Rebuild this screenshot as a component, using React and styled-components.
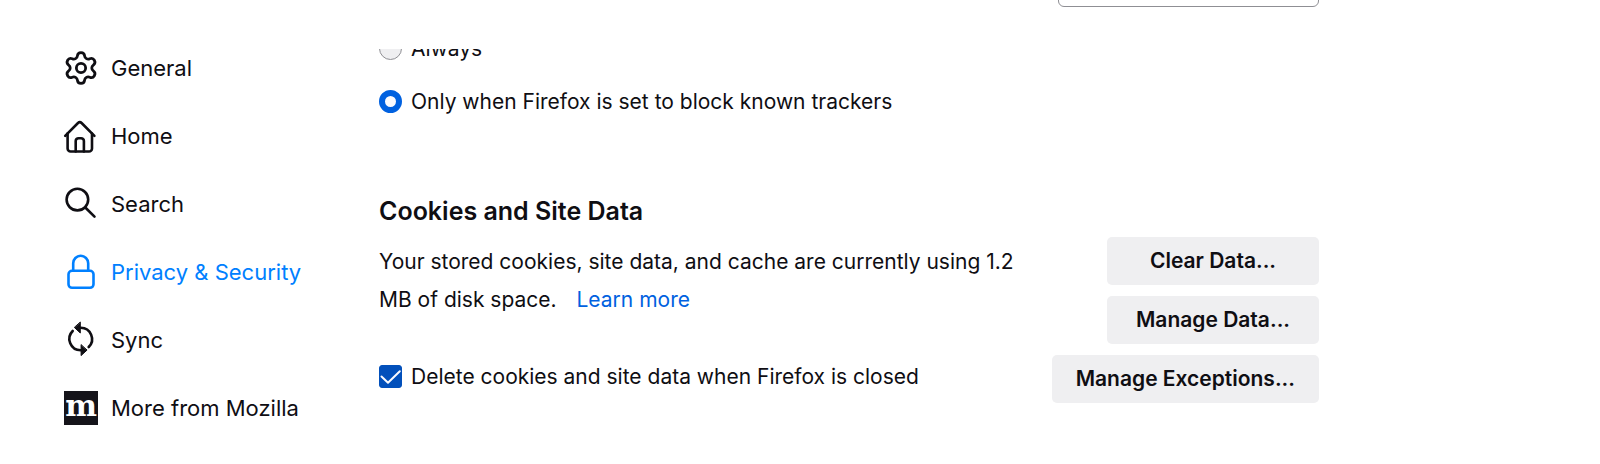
import React from "react";
import styled, { createGlobalStyle } from "styled-components";

const GlobalStyle = createGlobalStyle`
  * {
    box-sizing: border-box;
  }

  body {
    margin: 0;
    background: #fff;
    color: #0f0e13;
    font-family: Inter, "Liberation Sans", sans-serif;
    font-size: 21px;
    line-height: 38px;
  }
`;

const Page = styled.div`
  display: flex;
  align-items: flex-start;
`;

const Sidebar = styled.nav`
  flex: 0 0 379px;
  padding: 34px 16px 0 64px;
  font-size: 22px;
`;

const Category = styled.a`
  display: flex;
  align-items: center;
  gap: 13px;
  height: 68px;
  color: ${(props) => (props.$selected ? "#0080ff" : "inherit")};
  text-decoration: none;
  white-space: nowrap;
`;

const Icon = styled.svg`
  flex: none;
  width: 34px;
  height: 34px;
  overflow: visible;
  fill: none;
  stroke: currentColor;
  stroke-width: ${(props) => props.$stroke || 2.6};
  stroke-linecap: round;
  stroke-linejoin: round;
`;

const Arrows = styled.path`
  fill: currentColor;
  stroke-width: 1;
`;

const MozillaLogo = styled.span`
  flex: none;
  width: 34px;
  height: 34px;
  background: #15141a;
  color: #fff;
  font-family: "DejaVu Serif", serif;
  font-size: 30px;
  font-weight: 700;
  line-height: 30px;
  display: flex;
  justify-content: center;
`;

const Main = styled.main`
  flex: 0 1 940px;
  min-width: 0;
`;

const SearchBar = styled.div`
  display: flex;
  justify-content: flex-end;
  align-items: flex-end;
  height: 49px;
  padding-bottom: 42px;
  overflow: hidden;
`;

const SearchInput = styled.input`
  width: 261px;
  height: 48px;
  padding: 0 12px;
  border: 1px solid #8f8f94;
  border-radius: 6px;
  background: #fff;
  font: inherit;
`;

const Scroller = styled.div`
  overflow: hidden;
`;

/* the pane is scrolled part of the way down */
const Pane = styled.div`
  margin-top: -27px;
`;

const Choice = styled.label`
  display: flex;
  align-items: center;
  gap: 9px;
  height: 53px;
`;

const Radio = styled.input`
  appearance: none;
  flex: none;
  width: 23px;
  height: 23px;
  margin: 0;
  border: 1px solid #8f8f94;
  border-radius: 50%;
  background: #efeff1;

  &:checked {
    border: 6px solid #0061e0;
    background: #fbfbfe;
  }
`;

const CheckBox = styled.span`
  display: grid;
  flex: none;

  > * {
    grid-area: 1 / 1;
    width: 23px;
    height: 23px;
  }
`;

const CheckInput = styled.input`
  appearance: none;
  margin: 0;
  border: 1px solid #8f8f94;
  border-radius: 3px;
  background: #efeff1;

  &:checked {
    border-color: #0250bb;
    background: #0250bb;
  }
`;

const CheckMark = styled.svg`
  pointer-events: none;
  fill: none;
  stroke: #fbfbfe;
  stroke-width: 2;
  stroke-linecap: round;
  stroke-linejoin: round;
`;

const Group = styled.section`
  margin-top: 64px;
`;

const Title = styled.h2`
  margin: 0;
  font-size: 25px;
  font-weight: 600;
  line-height: 38px;
`;

const Columns = styled.div`
  display: flex;
  justify-content: space-between;
  gap: 16px;
  margin-top: 7px;
`;

const Details = styled.div`
  flex: 0 1 656px;
  padding-top: 6px;
`;

const Description = styled.p`
  margin: 0 0 31px;
`;

const LearnMore = styled.a`
  margin-left: 14px;
  color: #0061e0;
  text-decoration: none;
`;

const Buttons = styled.div`
  display: flex;
  flex-direction: column;
  align-items: flex-end;
  gap: 11px;
`;

const Button = styled.button`
  min-width: 212px;
  height: 48px;
  padding: 0 24px;
  border: 0;
  border-radius: 5px;
  background: #efeff1;
  color: inherit;
  font: inherit;
  font-weight: 600;
  white-space: nowrap;
`;

function GearIcon() {
  return (
    <Icon viewBox="1 1 22 22" $stroke={1.8}>
      <path d="M9.671 4.136a2.34 2.34 0 0 1 4.659 0 2.34 2.34 0 0 0 3.319 1.915 2.34 2.34 0 0 1 2.33 4.033 2.34 2.34 0 0 0 0 3.831 2.34 2.34 0 0 1-2.33 4.033 2.34 2.34 0 0 0-3.319 1.915 2.34 2.34 0 0 1-4.659 0 2.34 2.34 0 0 0-3.32-1.915 2.34 2.34 0 0 1-2.33-4.033 2.34 2.34 0 0 0 0-3.831A2.34 2.34 0 0 1 6.35 6.051a2.34 2.34 0 0 0 3.319-1.915" />
      <circle cx="12" cy="12" r="3" />
    </Icon>
  );
}

function HomeIcon() {
  return (
    <Icon viewBox="0 -1 34 34">
      <path d="M1.2 15.8 14 3a2.6 2.6 0 0 1 3.6 0l12.8 12.8" />
      <path d="M3.6 13.5V28.5a3 3 0 0 0 3 3H25a3 3 0 0 0 3-3V13.5" />
      <path d="M11.7 31.5V21a2.8 2.8 0 0 1 2.8-2.8h2.6a2.8 2.8 0 0 1 2.8 2.8v10.5" />
    </Icon>
  );
}

function SearchIcon() {
  return (
    <Icon viewBox="0 0 34 34">
      <circle cx="13.4" cy="12.6" r="10.8" />
      <path d="m21.3 20.5 9.2 9.2" />
    </Icon>
  );
}

function LockIcon() {
  return (
    <Icon viewBox="0 -1 34 34">
      <rect x="4.5" y="14.8" width="25" height="17" rx="3.5" />
      <path d="M9.2 14.8V7.3a7.5 7.5 0 0 1 15 0v7.5" />
    </Icon>
  );
}

function SyncIcon() {
  return (
    <Icon viewBox="0 0 34 34">
      <path d="M16.7 4.7a11.3 11.3 0 0 1 8 19.3M16.7 27.3a11.3 11.3 0 0 1-8-19.3" />
      <Arrows d="M16.3-.6v10.6L10.6 4.7zM17.1 22v10.6l5.7-5.3z" />
    </Icon>
  );
}

const categories = [
  { id: "general", label: "General", icon: <GearIcon /> },
  { id: "home", label: "Home", icon: <HomeIcon /> },
  { id: "search", label: "Search", icon: <SearchIcon /> },
  { id: "privacy", label: "Privacy & Security", icon: <LockIcon /> },
  { id: "sync", label: "Sync", icon: <SyncIcon /> },
  {
    id: "mozilla",
    label: "More from Mozilla",
    icon: <MozillaLogo aria-hidden="true">m</MozillaLogo>,
  },
];

function App() {
  return (
    <Page>
      <GlobalStyle />
      <Sidebar>
        {categories.map(({ id, label, icon }) => (
          <Category key={id} href={`#${id}`} $selected={id === "privacy"}>
            {icon}
            <span>{label}</span>
          </Category>
        ))}
      </Sidebar>
      <Main>
        <SearchBar>
          <SearchInput type="search" aria-label="Search" />
        </SearchBar>
        <Scroller>
          <Pane>
            <Choice>
              <Radio type="radio" name="dnt" value="always" />
              Always
            </Choice>
            <Choice>
              <Radio type="radio" name="dnt" value="trackers" defaultChecked />
              Only when Firefox is set to block known trackers
            </Choice>
            <Group>
              <Title>Cookies and Site Data</Title>
              <Columns>
                <Details>
                  <Description>
                    Your stored cookies, site data, and cache are currently
                    using 1.2 MB of disk space.{" "}
                    <LearnMore href="#learn-more">Learn more</LearnMore>
                  </Description>
                  <Choice>
                    <CheckBox>
                      <CheckInput type="checkbox" defaultChecked />
                      <CheckMark viewBox="0 0 23 23">
                        <path d="m2.5 11.5 6.5 6.3L20.8 6.3" />
                      </CheckMark>
                    </CheckBox>
                    Delete cookies and site data when Firefox is closed
                  </Choice>
                </Details>
                <Buttons>
                  <Button type="button">Clear Data...</Button>
                  <Button type="button">Manage Data...</Button>
                  <Button type="button">Manage Exceptions...</Button>
                </Buttons>
              </Columns>
            </Group>
          </Pane>
        </Scroller>
      </Main>
    </Page>
  );
}

export default App;
